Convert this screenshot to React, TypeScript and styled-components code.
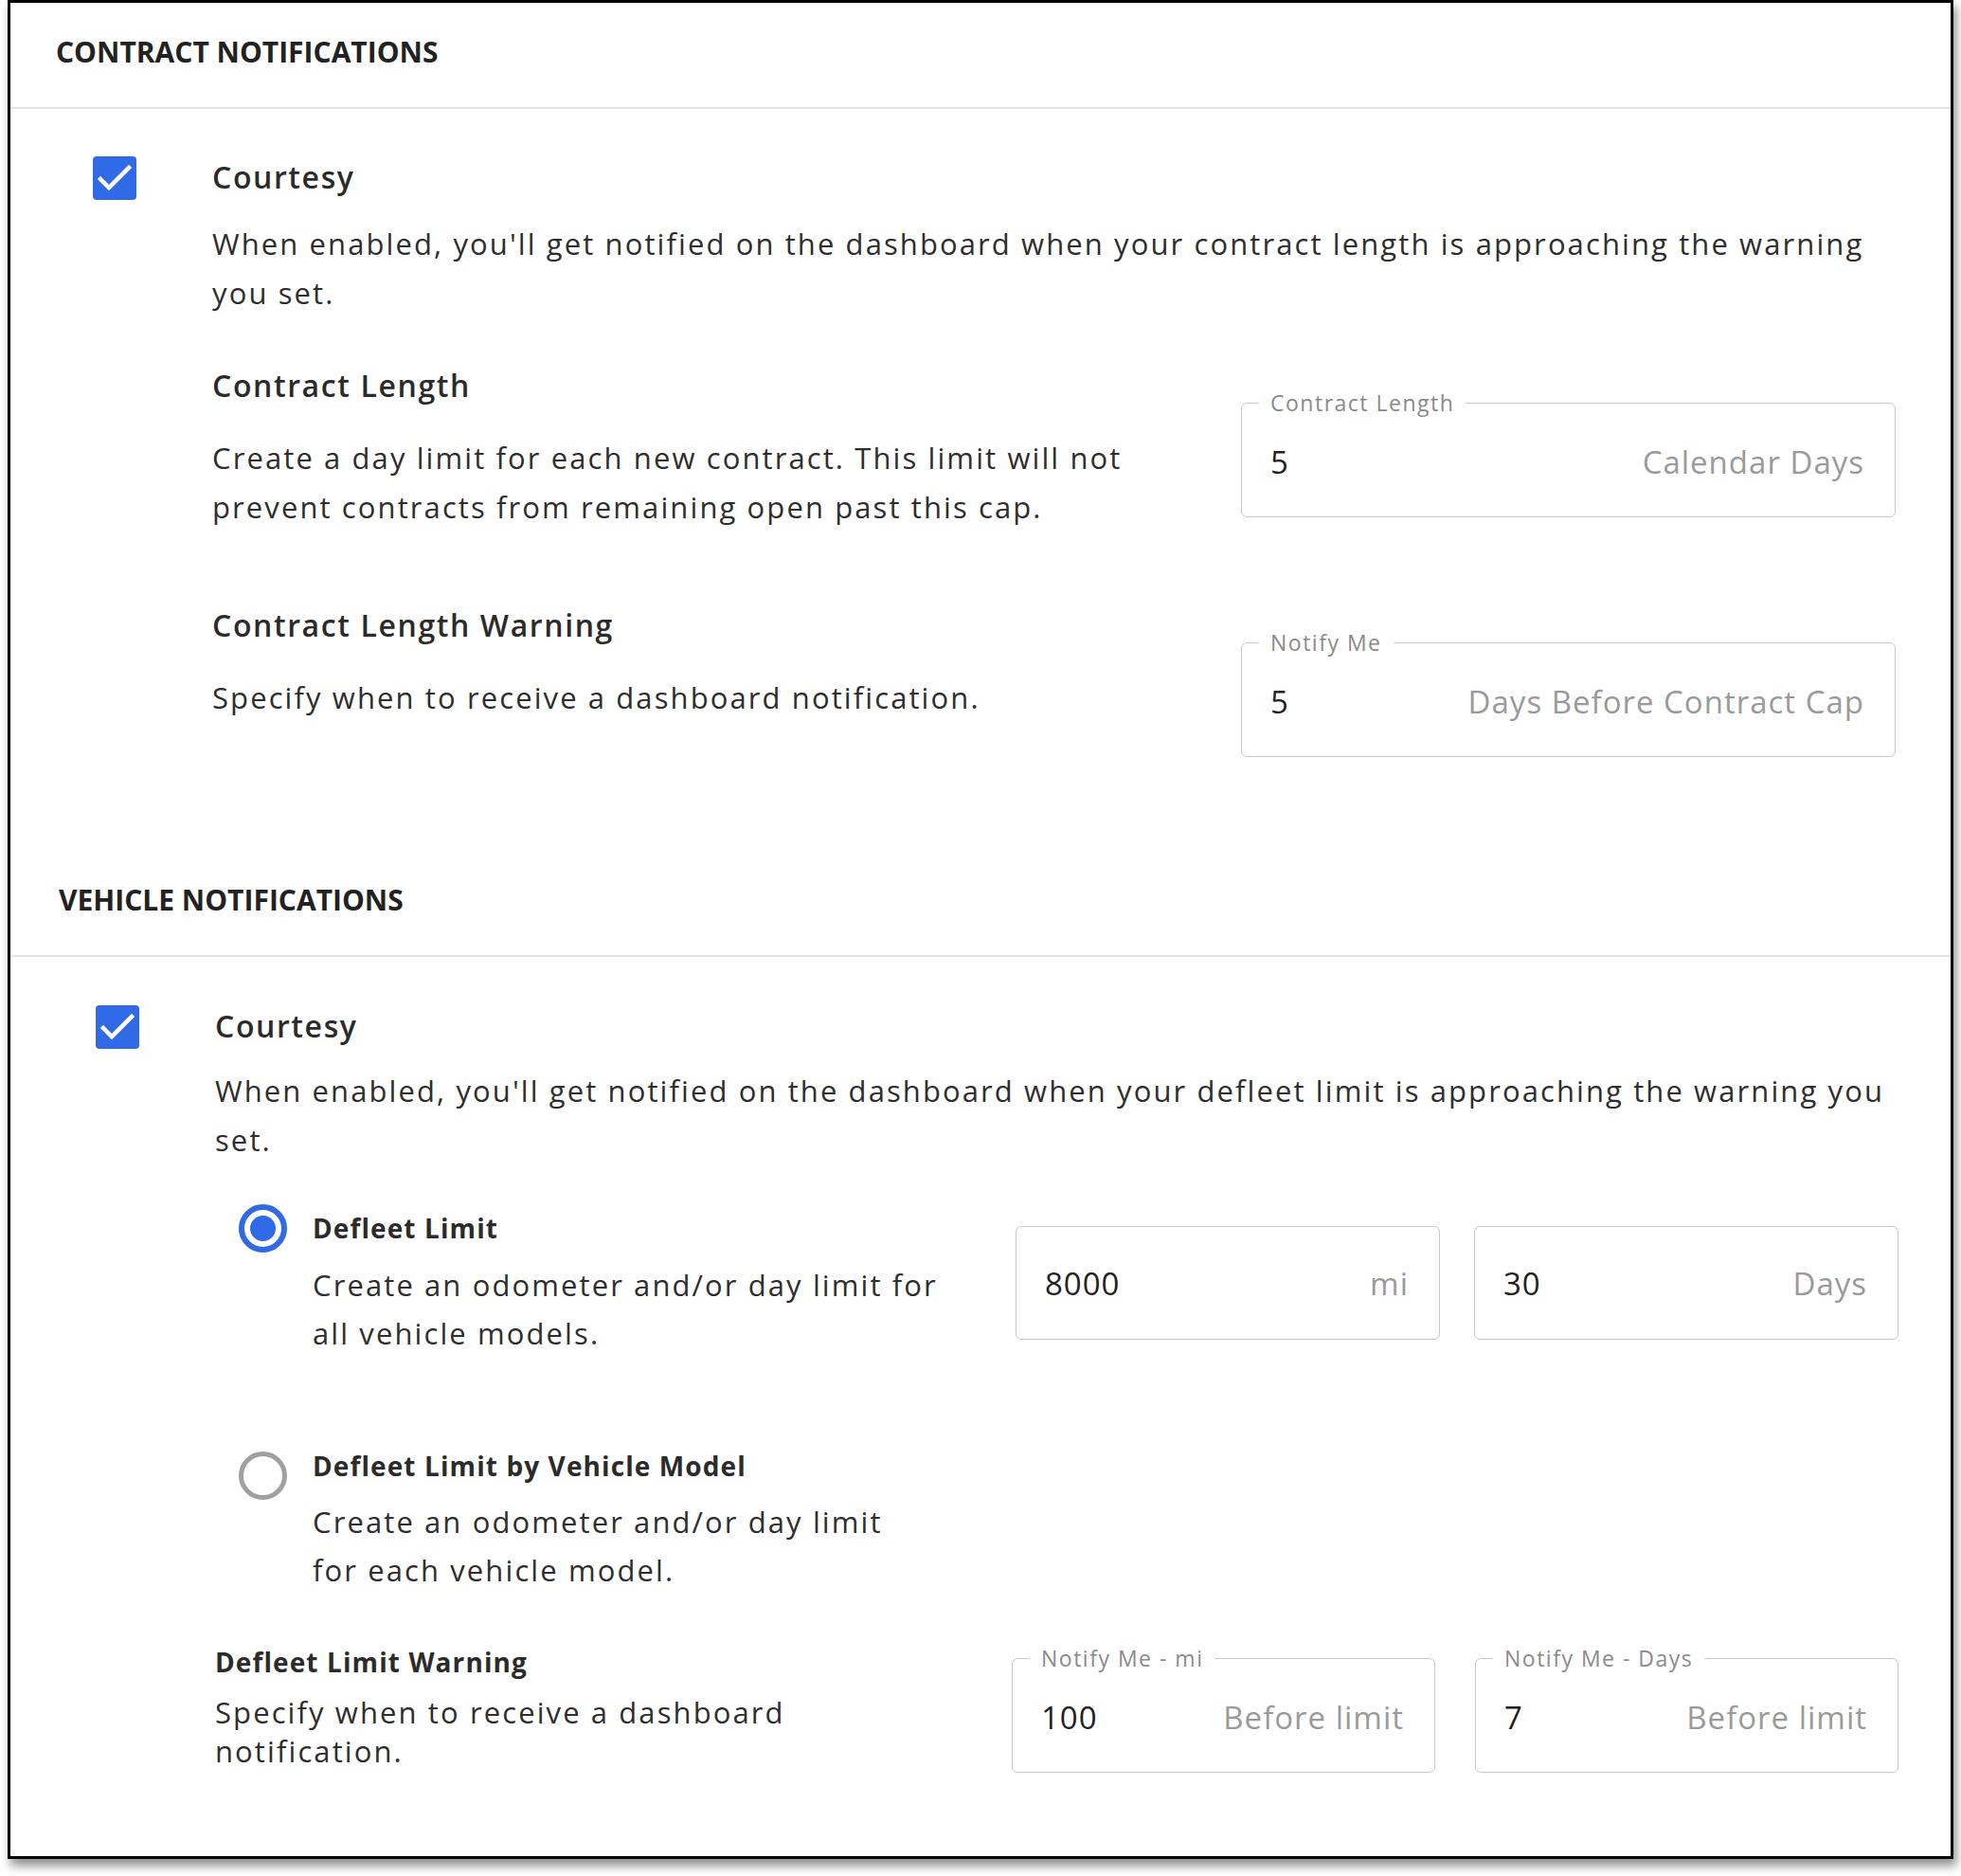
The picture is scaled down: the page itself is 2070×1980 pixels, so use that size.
import styled, { createGlobalStyle } from 'styled-components';

const GlobalStyle = createGlobalStyle`
  html, body {
    margin: 0;
    padding: 0;
    background: #fff;
  }
  body {
    font-family: 'Open Sans', 'Liberation Sans', sans-serif;
    color: #333;
  }
  * {
    box-sizing: border-box;
  }
`;

const BLUE = '#306ae6';

function CheckIcon() {
  return (
    <svg width="46" height="46" viewBox="0 0 46 46">
      <rect x="0" y="0" width="46" height="46" rx="4" fill={BLUE} />
      <path
        d="M8 24 L17 33 L38 12"
        fill="none"
        stroke="#fff"
        strokeWidth="4.5"
        strokeLinecap="square"
      />
    </svg>
  );
}

type FieldProps = {
  label?: string;
  value: string;
  unit: string;
};

function OutlinedField({ label, value, unit }: FieldProps) {
  return (
    <FieldBox>
      {label && <FieldLegend>{label}</FieldLegend>}
      <FieldBody $labelled={!!label}>
        <FieldValue>{value}</FieldValue>
        <FieldUnit>{unit}</FieldUnit>
      </FieldBody>
    </FieldBox>
  );
}

export default function App() {
  return (
    <>
      <GlobalStyle />
      <Page>
        <Frame>
          <SectionHeader $inset={48}>CONTRACT NOTIFICATIONS</SectionHeader>
          <SectionBody $left={87} $right={58} $top={49} $bottom={99}>
            <OptionGrid>
              <CheckSlot>
                <CheckIcon />
              </CheckSlot>
              <div>
                <Title>Courtesy</Title>
                <Description $lh={52} $mt={21}>
                  When enabled, you'll get notified on the dashboard when your
                  contract length is approaching the warning you set.
                </Description>

                <FieldRow $space={49}>
                  <div>
                    <Title>Contract Length</Title>
                    <Description $lh={52} $mt={27}>
                      Create a day limit for each new contract. This limit will
                      not prevent contracts from remaining open past this cap.
                    </Description>
                  </div>
                  <FieldSlot $offset={26}>
                    <OutlinedField
                      label="Contract Length"
                      value="5"
                      unit="Calendar Days"
                    />
                  </FieldSlot>
                </FieldRow>

                <FieldRow $space={76}>
                  <div>
                    <Title>Contract Length Warning</Title>
                    <Description $lh={52} $mt={27}>
                      Specify when to receive a dashboard notification.
                    </Description>
                  </div>
                  <FieldSlot $offset={26}>
                    <OutlinedField
                      label="Notify Me"
                      value="5"
                      unit="Days Before Contract Cap"
                    />
                  </FieldSlot>
                </FieldRow>
              </div>
            </OptionGrid>
          </SectionBody>

          <SectionHeader $inset={51}>VEHICLE NOTIFICATIONS</SectionHeader>
          <SectionBody $left={90} $right={55} $top={50} $bottom={88}>
            <OptionGrid>
              <CheckSlot>
                <CheckIcon />
              </CheckSlot>
              <div>
                <Title>Courtesy</Title>
                <Description $lh={52} $mt={19}>
                  When enabled, you'll get notified on the dashboard when your
                  defleet limit is approaching the warning you set.
                </Description>

                <RadioRow $space={47}>
                  <Radio $checked $mt={-5} />
                  <RadioText $maxWidth={690}>
                    <RadioLabel>Defleet Limit</RadioLabel>
                    <Description $lh={51} $mt={15}>
                      Create an odometer and/or day limit for all vehicle
                      models.
                    </Description>
                  </RadioText>
                  <FieldPair $offset={18} $gap={36}>
                    <OutlinedField value="8000" unit="mi" />
                    <OutlinedField value="30" unit="Days" />
                  </FieldPair>
                </RadioRow>

                <RadioRow $space={94}>
                  <Radio $checked={false} $mt={5} />
                  <RadioText $maxWidth={630}>
                    <RadioLabel>Defleet Limit by Vehicle Model</RadioLabel>
                    <Description $lh={51} $mt={14}>
                      Create an odometer and/or day limit for each vehicle
                      model.
                    </Description>
                  </RadioText>
                </RadioRow>

                <WarningRow $space={51}>
                  <RadioText $maxWidth={660}>
                    <RadioLabel>Defleet Limit Warning</RadioLabel>
                    <Description $lh={41} $mt={13}>
                      Specify when to receive a dashboard notification.
                    </Description>
                  </RadioText>
                  <FieldPair $offset={1} $gap={42}>
                    <OutlinedField
                      label="Notify Me - mi"
                      value="100"
                      unit="Before limit"
                    />
                    <OutlinedField
                      label="Notify Me - Days"
                      value="7"
                      unit="Before limit"
                    />
                  </FieldPair>
                </WarningRow>
              </div>
            </OptionGrid>
          </SectionBody>
        </Frame>
      </Page>
    </>
  );
}

const Page = styled.div`
  padding: 0 0 20px 8px;
`;

const Frame = styled.div`
  width: 2054px;
  border: 3px solid #000;
  background: #fff;
  box-shadow: 3px 7px 10px rgba(0, 0, 0, 0.45);
`;

const SectionHeader = styled.h2<{ $inset: number }>`
  margin: 0;
  height: 112px;
  padding: 0 0 8px ${(p) => p.$inset}px;
  display: flex;
  align-items: center;
  font-size: 30px;
  font-weight: 700;
  color: #222;
  border-bottom: 2px solid #e3e3e3;
`;

const SectionBody = styled.div<{
  $left: number;
  $right: number;
  $top: number;
  $bottom: number;
}>`
  padding: ${(p) => `${p.$top}px ${p.$right}px ${p.$bottom}px ${p.$left}px`};
`;

const OptionGrid = styled.div`
  display: grid;
  grid-template-columns: 126px 1fr;
`;

const CheckSlot = styled.div`
  padding-top: 1px;
  line-height: 0;
`;

const Title = styled.div`
  font-size: 32px;
  line-height: 46px;
  font-weight: 600;
  letter-spacing: 1.6px;
  color: #2b2b2b;
`;

const Description = styled.p<{ $lh: number; $mt: number }>`
  margin: ${(p) => p.$mt}px 0 0;
  font-size: 31px;
  line-height: ${(p) => p.$lh}px;
  letter-spacing: 2.1px;
  color: #2e2e2e;
`;

const FieldRow = styled.div<{ $space: number }>`
  display: grid;
  grid-template-columns: 1fr 691px;
  column-gap: 100px;
  align-items: start;
  margin-top: ${(p) => p.$space}px;
`;

const FieldSlot = styled.div<{ $offset: number }>`
  margin-top: ${(p) => p.$offset}px;
`;

const FieldPair = styled.div<{ $offset: number; $gap: number }>`
  display: grid;
  grid-template-columns: 1fr 1fr;
  column-gap: ${(p) => p.$gap}px;
  margin-top: ${(p) => p.$offset}px;
`;

const FieldBox = styled.fieldset`
  margin: 0;
  min-width: 0;
  padding: 0 32px 0 30px;
  border: 1.5px solid #c9c9c9;
  border-radius: 6px;
  background: #fff;
`;

const FieldLegend = styled.legend`
  margin-left: -12px;
  padding: 0 12px;
  font-size: 23px;
  line-height: 30px;
  letter-spacing: 1.5px;
  color: #8a8a8a;
`;

const FieldBody = styled.div<{ $labelled: boolean }>`
  display: flex;
  align-items: center;
  justify-content: space-between;
  height: ${(p) => (p.$labelled ? 105 : 118)}px;
  padding-bottom: ${(p) => (p.$labelled ? 11 : 0)}px;
  font-size: 33px;
  letter-spacing: 1px;
`;

const FieldValue = styled.span`
  color: #222;
`;

const FieldUnit = styled.span`
  color: #9a9a9a;
`;

const RadioRow = styled.div<{ $space: number }>`
  display: grid;
  grid-template-columns: 103px 1fr 932px;
  align-items: start;
  margin-top: ${(p) => p.$space}px;
`;

const WarningRow = styled.div<{ $space: number }>`
  display: grid;
  grid-template-columns: 1fr 936px;
  align-items: start;
  margin-top: ${(p) => p.$space}px;
`;

const Radio = styled.span<{ $checked: boolean; $mt: number }>`
  display: flex;
  align-items: center;
  justify-content: center;
  width: 51px;
  height: 51px;
  margin: ${(p) => p.$mt}px 0 0 25px;
  border-radius: 50%;
  border: ${(p) => (p.$checked ? `6px solid ${BLUE}` : '5px solid #a0a0a0')};

  &::after {
    content: '';
    display: ${(p) => (p.$checked ? 'block' : 'none')};
    width: 27px;
    height: 27px;
    border-radius: 50%;
    background: ${BLUE};
  }
`;

const RadioText = styled.div<{ $maxWidth: number }>`
  max-width: ${(p) => p.$maxWidth}px;
`;

const RadioLabel = styled.div`
  font-size: 28px;
  line-height: 40px;
  font-weight: 700;
  letter-spacing: 1.1px;
  color: #2b2b2b;
`;
